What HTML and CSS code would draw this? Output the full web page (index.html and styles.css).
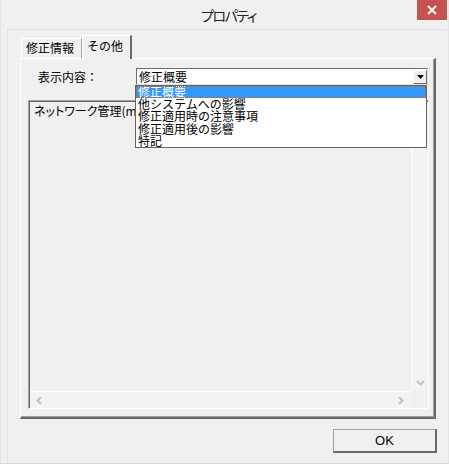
FILE: index.html
```html
<!DOCTYPE html>
<html lang="ja">
<head>
<meta charset="utf-8">
<title>プロパティ</title>
<link rel="stylesheet" href="styles.css">
</head>
<body>
<div class="window">
  <div class="titlebar">
    <div class="title">プロパティ</div>
    <div class="close"><svg width="10" height="10" viewBox="0 0 10 10"><path d="M1 1 L9 9 M9 1 L1 9" stroke="#fff" stroke-width="2"/></svg></div>
  </div>
  <div class="client">
    <div class="tabs">
      <div class="tab">修正情報</div>
      <div class="tab active">その他</div>
    </div>
    <div class="panel">
      <div class="row">
        <div class="label">表示内容：</div>
        <div class="combo">
          <span class="combo-text">修正概要</span>
          <span class="combo-btn"><svg width="7" height="4" viewBox="0 0 7 4"><path d="M0 0 H7 L3.5 4 Z" fill="#000"/></svg></span>
        </div>
      </div>
      <div class="textbox">
        <div class="text-area">
          <div class="content">ネットワーク管理(mp</div>
          <div class="vscroll"><svg width="9" height="6" viewBox="0 0 9 6"><path d="M1 1 L4.5 4.5 L8 1" stroke="#c2c2c2" stroke-width="2" fill="none"/></svg></div>
        </div>
        <div class="hscroll">
          <svg width="6" height="9" viewBox="0 0 6 9"><path d="M5 1 L1.5 4.5 L5 8" stroke="#c2c2c2" stroke-width="2" fill="none"/></svg>
          <svg width="6" height="9" viewBox="0 0 6 9"><path d="M1 1 L4.5 4.5 L1 8" stroke="#c2c2c2" stroke-width="2" fill="none"/></svg>
        </div>
      </div>
    </div>
    <div class="footer">
      <button class="ok">OK</button>
    </div>
  </div>
  <ul class="dropdown">
    <li class="sel">修正概要</li>
    <li>他システムへの影響</li>
    <li>修正適用時の注意事項</li>
    <li>修正適用後の影響</li>
    <li>特記</li>
  </ul>
</div>
</body>
</html>
```
FILE: styles.css
```css
* { box-sizing: border-box; }
html, body { margin: 0; padding: 0; }
body {
  width: 449px;
  height: 464px;
  background: #f0f0f0;
  font-family: "Noto Sans CJK JP", "Liberation Sans", sans-serif;
  font-size: 12px;
  color: #000;
  overflow: hidden;
}
.window {
  position: relative;
  width: 449px;
  height: 464px;
  background: #f0f0f0;
  border-left: 1px solid #e4e4e4;
  border-right: 1px solid #e4e4e4;
  border-bottom: 1px solid #d8d8d8;
}
.titlebar {
  position: relative;
  height: 29px;
  display: flex;
  justify-content: center;
}
.title {
  font-size: 14px;
  line-height: 16px;
  letter-spacing: -1.5px;
  color: #222;
  margin-top: 7px;
  margin-left: 8px;
  font-feature-settings: "palt";
}
.close {
  position: absolute;
  top: 0;
  right: 1px;
  width: 30px;
  height: 20px;
  background: #c75050;
  display: flex;
  align-items: center;
  justify-content: center;
}
.client {
  margin: 0 1px 0 6px;
  height: 434px;
  border-top: 1px solid #e2e2e2;
  border-left: 1px solid #e2e2e2;
  padding: 5px 0 0 12px;
  display: flex;
  flex-direction: column;
}
.tabs {
  display: flex;
  align-items: flex-end;
  height: 23px;
  padding-left: 1px;
}
.tab {
  height: 20px;
  padding: 0 4px;
  line-height: 18px;
  border-top: 1px solid #fff;
  border-left: 1px solid #fff;
  border-right: 1px solid #a0a0a0;
  width: 61px;
}
.tab.active {
  height: 24px;
  width: 50px;
  margin-bottom: -1px;
  border-right: 2px solid #696969;
  line-height: 20px;
  background: #f0f0f0;
  position: relative;
  z-index: 1;
}
.panel {
  width: 416px;
  height: 361px;
  border-top: 1px solid #fff;
  border-left: 1px solid #fff;
  border-right: 2px solid #696969;
  border-bottom: 2px solid #696969;
  box-shadow: inset -1px -1px 0 #a0a0a0;
  padding: 9px 0 0 17px;
}
.row {
  display: flex;
  align-items: center;
  height: 17px;
}
.label {
  width: 98px;
  line-height: 17px;
}
.combo {
  width: 292px;
  height: 17px;
  background: #fff;
  border-top: 1px solid #6d6d6d;
  border-left: 1px solid #6d6d6d;
  border-right: 1px solid #e0e0e0;
  border-bottom: 1px solid #e0e0e0;
  display: flex;
  align-items: center;
  justify-content: space-between;
  padding-left: 2px;
}
.combo-text { line-height: 15px; }
.combo-btn {
  width: 14px;
  height: 14px;
  background: #f0f0f0;
  border-top: 1px solid #fff;
  border-left: 1px solid #fff;
  border-right: 1px solid #696969;
  border-bottom: 1px solid #696969;
  display: flex;
  align-items: center;
  justify-content: center;
}
.textbox {
  margin: 15px 0 0 -10px;
  width: 401px;
  height: 309px;
  border-top: 1px solid #a0a0a0;
  border-left: 1px solid #a0a0a0;
  border-right: 1px solid #fff;
  border-bottom: 1px solid #fff;
  box-shadow: inset 1px 1px 0 #696969;
  padding: 1px 0 0 1px;
  display: flex;
  flex-direction: column;
}
.text-area {
  flex: 1;
  display: flex;
}
.content {
  flex: 1;
  padding: 2px 0 0 4px;
  line-height: 14px;
  white-space: nowrap;
  overflow: hidden;
  font-feature-settings: "palt";
}
.vscroll {
  width: 17px;
  background: #f3f3f3;
  border-left: 1px solid #fff;
  display: flex;
  align-items: flex-end;
  justify-content: center;
  padding-bottom: 5px;
}
.hscroll {
  height: 17px;
  margin-right: 17px;
  background: #f3f3f3;
  border-top: 1px solid #fff;
  display: flex;
  align-items: center;
  justify-content: space-between;
  padding: 0 7px 0 6px;
}
.footer {
  display: flex;
  justify-content: flex-end;
  padding: 10px 10px 0 0;
}
.ok {
  width: 104px;
  height: 24px;
  font-family: "Liberation Sans", sans-serif;
  font-size: 13px;
  background: #f0f0f0;
  border-top: 1px solid #a0a0a0;
  border-left: 1px solid #a0a0a0;
  border-right: 2px solid #696969;
  border-bottom: 2px solid #696969;
  padding: 0;
  color: #000;
}
.dropdown {
  position: absolute;
  left: 134px;
  top: 85px;
  width: 292px;
  height: 63px;
  margin: 0;
  padding: 0;
  list-style: none;
  background: #fff;
  border: 1px solid #646464;
}
.dropdown li {
  height: 12.25px;
  line-height: 12.25px;
  padding-left: 2px;
  white-space: nowrap;
}
.dropdown li.sel {
  height: 12px;
  line-height: 12px;
  background: #3399ff;
  color: #fff;
  outline: 1px dotted #c86400;
  outline-offset: -1px;
}
```
